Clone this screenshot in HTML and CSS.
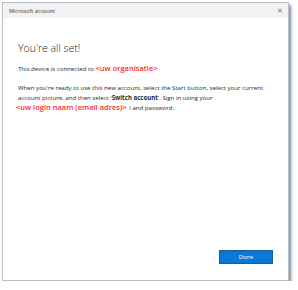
FILE: index.html
```html
<!DOCTYPE html>
<html lang="nl">
<head>
    <meta charset="UTF-8">
    <title>Microsoft account</title>
    <link rel="stylesheet" href="styles.css">
</head>
<body>
    <div class="window">
        <div class="titlebar">
            <span class="title">Microsoft account</span>
            <span class="close">&#x2715;</span>
        </div>
        <div class="content">
            <h1>You're all set!</h1>
            <p class="connected">This device is connected to <span class="note">&lt;uw organisatie&gt;</span></p>
            <div class="info">
                <p>When you're ready to use this new account, select the Start button, select your current</p>
                <p>account picture, and then select '<strong>Switch account</strong>'. Sign in using your</p>
                <p><span class="note login">&lt;uw login naam (email adres)&gt;</span> <span>I and password.</span></p>
            </div>
        </div>
        <div class="footer">
            <button class="btn">Done</button>
        </div>
    </div>
</body>
</html>
```

FILE: styles.css
```css
body {
    margin: 0;
    padding: 0;
    background: #ffffff;
    font-family: "Open Sans", "Noto Sans", sans-serif;
    color: #1f1f1f;
}

.window {
    margin: 2px 0 0 2px;
    width: 285px;
    height: 277px;
    background: #ffffff;
    border: 1px solid #b7c2cc;
    box-shadow: 2px 3px 3px rgba(70, 85, 105, 0.7);
    display: flex;
    flex-direction: column;
}

.titlebar {
    height: 15px;
    background: #f2f2f2;
    display: flex;
    align-items: center;
    justify-content: space-between;
    padding: 0 5px 0 6px;
}

.title {
    font-size: 5.5px;
    color: #333;
}

.close {
    font-size: 7px;
    font-weight: 300;
    color: #777;
}

.content {
    flex: 1;
    padding: 0 0 0 15px;
}

h1 {
    font-weight: 300;
    font-size: 10.5px;
    line-height: 14px;
    margin: 23px 0 0 0;
    color: #222;
}

.connected {
    font-size: 6.1px;
    line-height: 10px;
    margin: 9px 0 0 0;
}

.info {
    font-size: 6.1px;
    line-height: 10px;
    margin: 9px 0 0 0;
    white-space: nowrap;
}

.info p {
    margin: 0;
}

.info strong {
    font-weight: 700;
}

.note {
    color: #ff2a2a;
    font-size: 7.5px;
    font-weight: 600;
    line-height: 1;
    margin-right: 1px;
}

.login {
    margin-left: -2px;
}

.footer {
    display: flex;
    justify-content: flex-end;
    padding: 0 15px 16px 0;
}

.btn {
    width: 54px;
    height: 14px;
    background: #0a78d6;
    border: 1px solid #1e5a99;
    color: #ffffff;
    font-family: "Open Sans", sans-serif;
    font-size: 5.8px;
    padding: 0;
}
```
